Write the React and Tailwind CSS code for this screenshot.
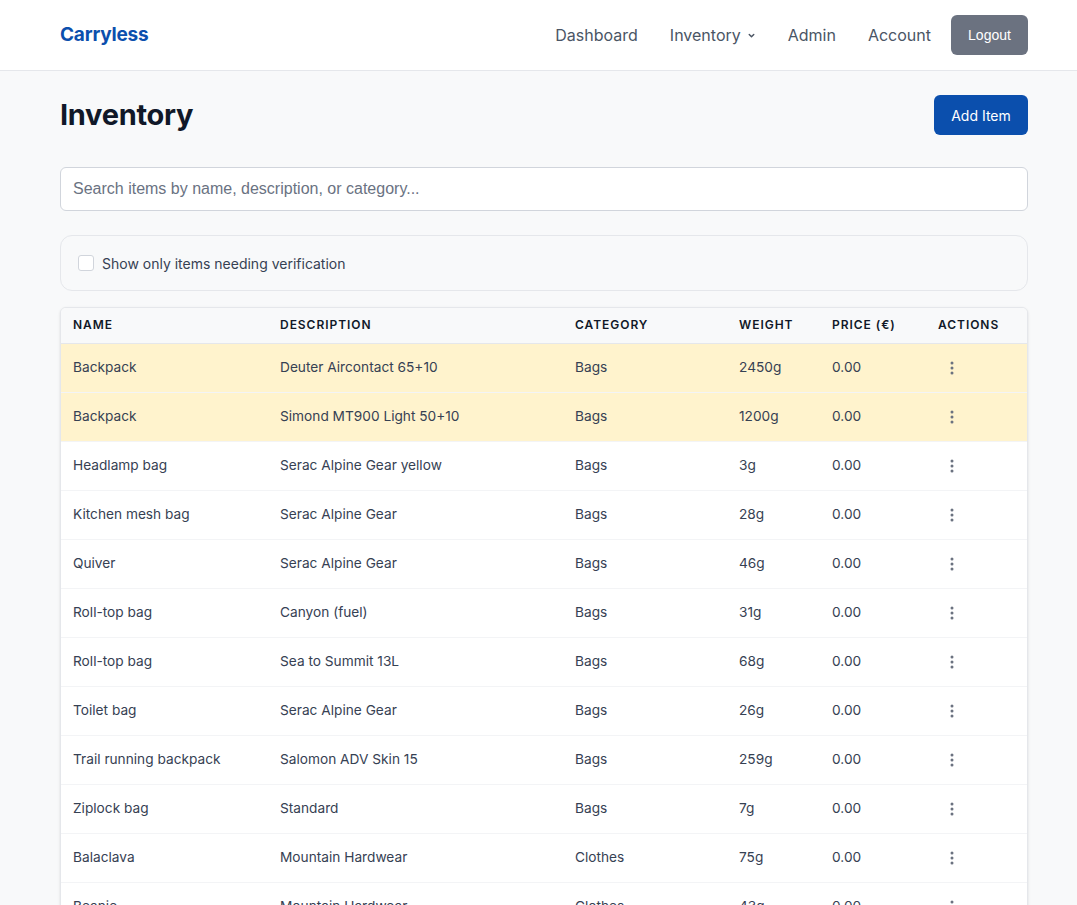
import React, { useState } from "react";

const items = [
    { name: 'Backpack', description: 'Deuter Aircontact 65+10', category: 'Bags', weight: '2450g', price: '0.00', verify: true },
    { name: 'Backpack', description: 'Simond MT900 Light 50+10', category: 'Bags', weight: '1200g', price: '0.00', verify: true },
    { name: 'Headlamp bag', description: 'Serac Alpine Gear yellow', category: 'Bags', weight: '3g', price: '0.00' },
    { name: 'Kitchen mesh bag', description: 'Serac Alpine Gear', category: 'Bags', weight: '28g', price: '0.00' },
    { name: 'Quiver', description: 'Serac Alpine Gear', category: 'Bags', weight: '46g', price: '0.00' },
    { name: 'Roll-top bag', description: 'Canyon (fuel)', category: 'Bags', weight: '31g', price: '0.00' },
    { name: 'Roll-top bag', description: 'Sea to Summit 13L', category: 'Bags', weight: '68g', price: '0.00' },
    { name: 'Toilet bag', description: 'Serac Alpine Gear', category: 'Bags', weight: '26g', price: '0.00' },
    { name: 'Trail running backpack', description: 'Salomon ADV Skin 15', category: 'Bags', weight: '259g', price: '0.00' },
    { name: 'Ziplock bag', description: 'Standard', category: 'Bags', weight: '7g', price: '0.00' },
    { name: 'Balaclava', description: 'Mountain Hardwear', category: 'Clothes', weight: '75g', price: '0.00' },
    { name: 'Beanie', description: 'Mountain Hardwear', category: 'Clothes', weight: '43g', price: '0.00' },
    { name: 'Down jacket', description: 'Rab Microlight Alpine', category: 'Clothes', weight: '450g', price: '0.00' },
];

function KebabIcon() {
    return (
        <svg width="4" height="14" viewBox="0 0 4 14" fill="#6b7280">
            <circle cx="2" cy="2" r="1.5" />
            <circle cx="2" cy="7" r="1.5" />
            <circle cx="2" cy="12" r="1.5" />
        </svg>
    );
}

function Navbar() {
    return (
        <nav className="h-[71px] bg-white border-b border-gray-200">
            <div className="h-full ml-[60px] w-[968px] flex items-center justify-between">
                <a className="text-[19px] font-bold text-[#0b4fad] tracking-[-0.01em]">Carryless</a>
                <div className="flex items-center text-[16px] text-gray-600">
                    <a className="px-4">Dashboard</a>
                    <a className="px-4 flex items-center gap-1.5">
                        Inventory
                        <svg width="9" height="9" viewBox="0 0 10 10" fill="none" stroke="#4b5563" strokeWidth="1.6" strokeLinecap="round" strokeLinejoin="round">
                            <path d="M2.5 4l2.5 2.5L7.5 4" />
                        </svg>
                    </a>
                    <a className="px-4">Admin</a>
                    <a className="px-4">Account</a>
                    <button className="ml-1 h-[40px] w-[77px] rounded-md bg-[#6b7280] text-white text-[14px]" style={{ fontFamily: '"Liberation Sans", Arial, sans-serif' }}>Logout</button>
                </div>
            </div>
        </nav>
    );
}

function App() {
    const [onlyVerify, setOnlyVerify] = useState(false);
    const rows = onlyVerify ? items.filter((i) => i.verify) : items;

    return (
        <div className="min-h-screen bg-[#f8f9fa]" style={{ fontFamily: 'Inter, "Noto Sans", sans-serif' }}>
            <Navbar />

            <main className="ml-[60px] w-[968px] pt-6">
                {/* Header */}
                <div className="flex items-center justify-between h-[40px] mb-8">
                    <h1 className="text-[29px] font-bold text-gray-900 tracking-[-0.01em]">Inventory</h1>
                    <button className="h-[40px] w-[94px] rounded-md bg-[#0b4fad] text-white text-[14px]">Add Item</button>
                </div>

                {/* Search */}
                <input
                    type="text"
                    placeholder="Search items by name, description, or category..."
                    className="w-full h-[44px] px-3 bg-white border border-gray-300 rounded-md text-[16px] text-gray-900 placeholder:text-gray-500 outline-none"
                    style={{ fontFamily: '"Liberation Sans", Arial, sans-serif' }}
                />

                {/* Filter */}
                <div className="mt-6 h-[56px] px-[17px] flex items-center border border-gray-200 rounded-xl bg-[#f8f9fa]">
                    <label className="flex items-center gap-2 text-[14px] text-gray-700">
                        <input
                            type="checkbox"
                            checked={onlyVerify}
                            onChange={(e) => setOnlyVerify(e.target.checked)}
                            className="appearance-none w-4 h-4 rounded-[3px] border border-gray-300 bg-white"
                        />
                        Show only items needing verification
                    </label>
                </div>

                {/* Table */}
                <div className="mt-4 bg-white border border-gray-200 rounded-t-md overflow-hidden shadow-sm">
                    <table className="w-full table-fixed text-left">
                        <colgroup>
                            <col className="w-[207px]" />
                            <col className="w-[295px]" />
                            <col className="w-[164px]" />
                            <col className="w-[93px]" />
                            <col className="w-[106px]" />
                            <col />
                        </colgroup>
                        <thead className="bg-[#f8f9fa] border-b border-gray-200">
                            <tr className="h-[35px] text-[12px] font-semibold uppercase tracking-[0.08em] text-gray-900">
                                <th className="px-3 font-semibold">Name</th>
                                <th className="px-3 font-semibold">Description</th>
                                <th className="px-3 font-semibold">Category</th>
                                <th className="px-3 font-semibold">Weight</th>
                                <th className="px-3 font-semibold">Price (€)</th>
                                <th className="px-3 font-semibold">Actions</th>
                            </tr>
                        </thead>
                        <tbody className="text-[13.7px] text-gray-700">
                            {rows.map((item, index) => (
                                <tr key={index} className={`h-[49px] border-b border-gray-100 ${item.verify ? 'bg-[#fff3cd]' : 'bg-white'}`}>
                                    <td className="px-3">{item.name}</td>
                                    <td className="px-3">{item.description}</td>
                                    <td className="px-3">{item.category}</td>
                                    <td className="px-3">{item.weight}</td>
                                    <td className="px-3">{item.price}</td>
                                    <td className="px-3">
                                        <button className="ml-[12px] w-[4px] flex items-center">
                                            <KebabIcon />
                                        </button>
                                    </td>
                                </tr>
                            ))}
                        </tbody>
                    </table>
                </div>
            </main>
        </div>
    );
}

export default App;
